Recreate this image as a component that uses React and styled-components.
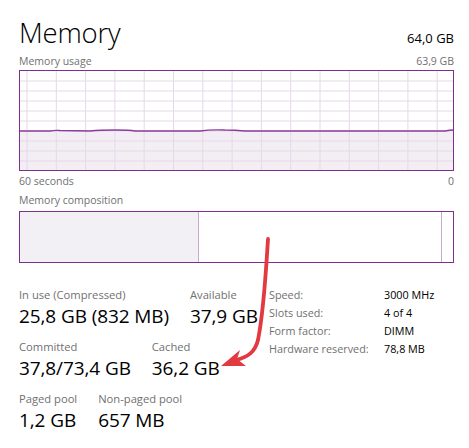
import styled, { createGlobalStyle } from "styled-components";

const GlobalStyle = createGlobalStyle`
  body {
    margin: 0;
    background: #fff;
    font-family: "Open Sans", "Noto Sans", sans-serif;
  }
`;

const Page = styled.div`
  position: relative;
  width: 435px;
  padding: 14px 15px 0 19px;
`;

const Header = styled.div`
  display: flex;
  justify-content: space-between;
  align-items: baseline;
`;

const Title = styled.h1`
  margin: 0;
  font-size: 27.5px;
  font-weight: 300;
  line-height: 38px;
  color: #000;
  letter-spacing: -0.2px;
`;

const Total = styled.span`
  font-size: 13px;
  color: #000;
`;

const LabelRow = styled.div`
  display: flex;
  justify-content: space-between;
  font-size: 10.5px;
  line-height: 14px;
  color: #707070;
  margin-top: ${(p) => p.$top || 0}px;
`;

const Graph = styled.div`
  height: 101px;
  border: 1px solid #7c2f8e;
  box-sizing: border-box;
  margin-top: 2px;
  svg {
    display: block;
  }
`;

const Composition = styled.div`
  display: flex;
  height: 52px;
  margin-top: 4px;
  border: 1px solid #7c2f8e;
  box-sizing: border-box;
`;

const Segment = styled.div`
  width: ${(p) => p.$w}px;
  flex: ${(p) => (p.$grow ? 1 : "none")};
  background: ${(p) => p.$bg || "#fff"};
  border-right: ${(p) => (p.$divider ? "1px solid #c9a9d4" : "none")};
`;

const Stats = styled.div`
  display: flex;
  margin-top: 25px;
`;

const Left = styled.div`
  width: 250px;
  display: flex;
  flex-direction: column;
  gap: 10px;
`;

const StatRow = styled.div`
  display: flex;
  gap: 21px;
`;

const Stat = styled.div`
  display: flex;
  flex-direction: column;
`;

const StatLabel = styled.span`
  font-size: 11.2px;
  line-height: 14px;
  color: #707070;
  white-space: nowrap;
`;

const StatValue = styled.span`
  font-size: 19px;
  line-height: 28px;
  color: #000;
  white-space: nowrap;
  letter-spacing: -0.1px;
`;

const Specs = styled.div`
  display: grid;
  grid-template-columns: 115px auto;
  row-gap: 4px;
  align-content: start;
  font-size: 10.8px;
  line-height: 14px;
`;

const SpecKey = styled.span`
  color: #707070;
`;

const SpecVal = styled.span`
  color: #000;
`;

const Arrow = styled.svg`
  position: absolute;
  left: 0;
  top: 0;
  pointer-events: none;
`;

const UsageChart = () => {
  const w = 433;
  const h = 99;
  const vlines = [];
  for (let x = 7; x < w; x += 29.3) vlines.push(x);
  const hlines = [];
  for (let y = 10; y < h; y += 10) hlines.push(y);
  const line =
    "M0 60 L30 60 Q35 59 40 59.5 L70 60 Q80 59 95 59 Q110 59 115 60 L180 60 Q190 58.5 205 59 Q215 59 225 60 L425 60 Q430 59 433 59";
  return (
    <svg width={w} height={h}>
      <path d={`${line} L433 99 L0 99 Z`} fill="#f2eef4" />
      {hlines.map((y) => (
        <line key={"h" + y} x1="0" x2={w} y1={y} y2={y} stroke="#e6d8ea" strokeWidth="1" />
      ))}
      {vlines.map((x) => (
        <line key={"v" + x} x1={x} x2={x} y1="0" y2={h} stroke="#e6d8ea" strokeWidth="1" />
      ))}
      <path d={line} fill="none" stroke="#8a3d9c" strokeWidth="1.3" />
    </svg>
  );
};

const App = () => {
  return (
    <>
      <GlobalStyle />
      <Page>
        <Header>
          <Title>Memory</Title>
          <Total>64,0 GB</Total>
        </Header>
        <LabelRow $top={2}>
          <span>Memory usage</span>
          <span>63,9 GB</span>
        </LabelRow>
        <Graph>
          <UsageChart />
        </Graph>
        <LabelRow $top={3}>
          <span>60 seconds</span>
          <span>0</span>
        </LabelRow>
        <LabelRow $top={5}>
          <span>Memory composition</span>
        </LabelRow>
        <Composition>
          <Segment $w={178} $bg="#f2f0f4" $divider />
          <Segment $grow $divider />
          <Segment $w={11} />
        </Composition>
        <Stats>
          <Left>
            <StatRow>
              <Stat>
                <StatLabel>In use (Compressed)</StatLabel>
                <StatValue>25,8 GB (832 MB)</StatValue>
              </Stat>
              <Stat>
                <StatLabel>Available</StatLabel>
                <StatValue>37,9 GB</StatValue>
              </Stat>
            </StatRow>
            <StatRow>
              <Stat>
                <StatLabel>Committed</StatLabel>
                <StatValue>37,8/73,4 GB</StatValue>
              </Stat>
              <Stat>
                <StatLabel>Cached</StatLabel>
                <StatValue>36,2 GB</StatValue>
              </Stat>
            </StatRow>
            <StatRow>
              <Stat>
                <StatLabel>Paged pool</StatLabel>
                <StatValue>1,2 GB</StatValue>
              </Stat>
              <Stat>
                <StatLabel>Non-paged pool</StatLabel>
                <StatValue>657 MB</StatValue>
              </Stat>
            </StatRow>
          </Left>
          <Specs>
            <SpecKey>Speed:</SpecKey>
            <SpecVal>3000 MHz</SpecVal>
            <SpecKey>Slots used:</SpecKey>
            <SpecVal>4 of 4</SpecVal>
            <SpecKey>Form factor:</SpecKey>
            <SpecVal>DIMM</SpecVal>
            <SpecKey>Hardware reserved:</SpecKey>
            <SpecVal>78,8 MB</SpecVal>
          </Specs>
        </Stats>
        <Arrow width="469" height="448">
          <path
            d="M268 239 C266 270 264 310 258 340 C255 352 248 357 236 360"
            fill="none"
            stroke="#e23a40"
            strokeWidth="3.8"
            strokeLinecap="round"
          />
          <path d="M221 366 L240 350 L237 359 L246 366 Z" fill="#e23a40" />
        </Arrow>
      </Page>
    </>
  );
};

export default App;
